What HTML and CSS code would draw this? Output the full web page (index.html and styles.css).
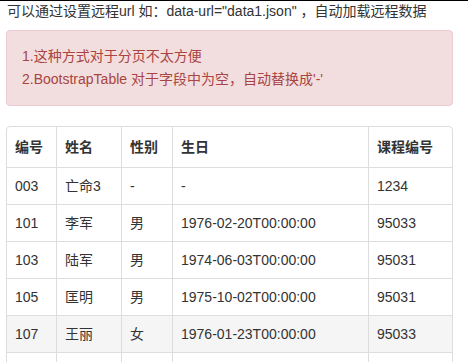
FILE: index.html
```html
<!DOCTYPE html>
<html lang="zh-CN">
<head>
<meta charset="utf-8">
<link rel="stylesheet" href="styles.css">
</head>
<body>
<div class="page">
  <p class="intro">可以通过设置远程url 如：data-url="data1.json" ，自动加载远程数据</p>
  <div class="alert">
    <div class="alert-line">1.这种方式对于分页不太方便</div>
    <div class="alert-line">2.BootstrapTable 对于字段中为空，自动替换成'-'</div>
  </div>
  <div class="table-box">
    <table class="grid">
      <colgroup>
        <col class="c1"><col class="c2"><col class="c3"><col class="c4"><col class="c5">
      </colgroup>
      <thead>
        <tr><th>编号</th><th>姓名</th><th>性别</th><th>生日</th><th>课程编号</th></tr>
      </thead>
      <tbody>
        <tr><td>003</td><td>亡命3</td><td>-</td><td>-</td><td>1234</td></tr>
        <tr><td>101</td><td>李军</td><td>男</td><td>1976-02-20T00:00:00</td><td>95033</td></tr>
        <tr><td>103</td><td>陆军</td><td>男</td><td>1974-06-03T00:00:00</td><td>95031</td></tr>
        <tr><td>105</td><td>匡明</td><td>男</td><td>1975-10-02T00:00:00</td><td>95031</td></tr>
        <tr class="hover"><td>107</td><td>王丽</td><td>女</td><td>1976-01-23T00:00:00</td><td>95033</td></tr>
        <tr class="empty"><td></td><td></td><td></td><td></td><td></td></tr>
      </tbody>
    </table>
  </div>
</div>
</body>
</html>
```
FILE: styles.css
```css
html, body {
  margin: 0;
  padding: 0;
  background: #fff;
}
body {
  font-family: "Liberation Sans", Arial, "Noto Sans CJK SC", sans-serif;
  font-size: 14px;
  line-height: 20px;
  color: #333;
  border-top: 1px solid #000;
  overflow: hidden;
}
.page {
  padding: 0 0 0 6px;
  width: 447px;
}
.intro {
  margin: 0 0 9px 1px;
  line-height: 20px;
  white-space: nowrap;
}
.alert {
  background: #f2dede;
  border: 1px solid #ebccd1;
  border-radius: 4px;
  color: #a94442;
  padding: 14px 15px;
  margin-bottom: 20px;
}
.alert-line {
  line-height: 23px;
  white-space: nowrap;
}
.table-box {
  border: 1px solid #ddd;
  border-radius: 4px;
  overflow: hidden;
}
.grid {
  width: 445px;
  table-layout: fixed;
  border-collapse: separate;
  border-spacing: 0;
}
.c1 { width: 49px; }
.c2 { width: 65px; }
.c3 { width: 51px; }
.c4 { width: 196px; }
.c5 { width: 84px; }
.grid th, .grid td {
  text-align: left;
  white-space: nowrap;
  border-left: 1px solid #ddd;
  padding: 8px;
}
.grid th:first-child, .grid td:first-child {
  border-left: none;
}
.grid th {
  font-weight: bold;
  height: 24px;
  line-height: 24px;
  padding: 8px;
  vertical-align: bottom;
}
.grid td {
  border-top: 1px solid #ddd;
  height: 20px;
  line-height: 20px;
  vertical-align: middle;
}
.grid tr.hover td {
  background: #f5f5f5;
}
```
